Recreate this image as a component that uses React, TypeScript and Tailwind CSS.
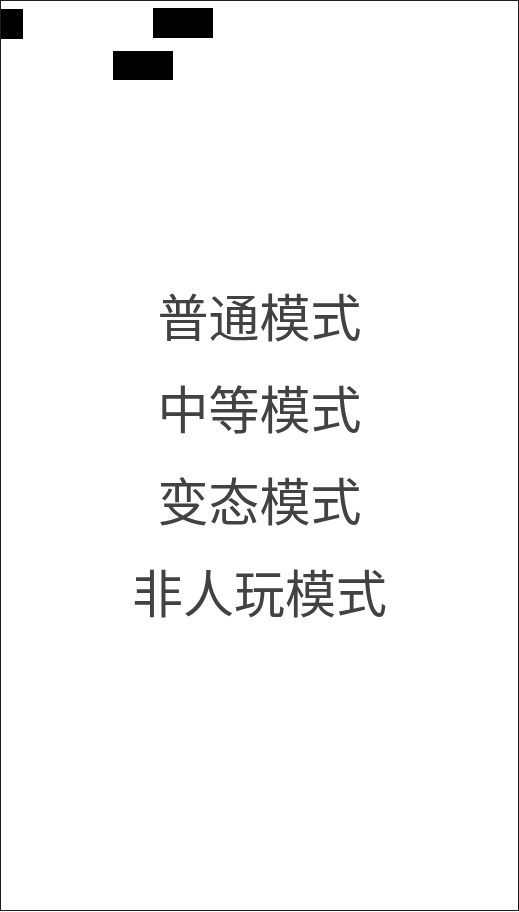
import React from "react";

const modes = ["普通模式", "中等模式", "变态模式", "非人玩模式"];

export default function App() {
  return (
    <div
      className="relative w-full h-[911px] border border-[#1e1e1e] bg-white flex flex-col items-center justify-center overflow-hidden"
      style={{ fontFamily: '"Noto Sans CJK SC", "Noto Sans", sans-serif' }}
    >
      <div className="absolute left-0 top-[8px] w-[22px] h-[30px] bg-black" />
      <div className="absolute left-[152px] top-[7px] w-[60px] h-[30px] bg-black" />
      <div className="absolute left-[112px] top-[50px] w-[60px] h-[29px] bg-black" />
      <div className="flex flex-col items-center pb-[5px]">
        {modes.map((m) => (
          <div key={m} className="text-[51px] leading-[92px] text-[#424242]">
            {m}
          </div>
        ))}
      </div>
    </div>
  );
}
